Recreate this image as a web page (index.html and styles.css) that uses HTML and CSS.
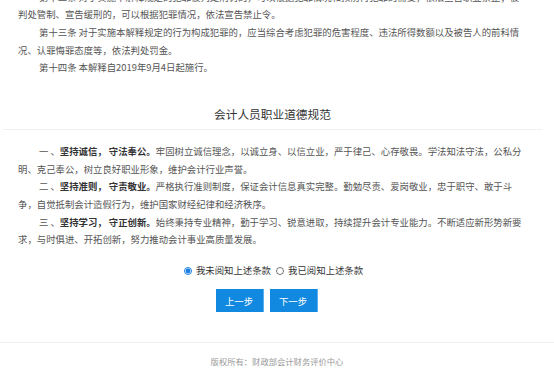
FILE: index.html
```html
<!DOCTYPE html>
<html lang="zh-CN">
<head>
    <meta charset="UTF-8">
    <meta name="viewport" content="width=device-width, initial-scale=1.0">
    <title>会计人员职业道德规范</title>
    <link rel="stylesheet" href="styles.css">
</head>
<body>

    <div class="page">
        <div class="law">
            <p>第十二条 对于实施本解释规定的犯罪被判处刑罚的，可以根据犯罪情况和预防再犯罪的需要，依法宣告职业禁止；被判处管制、宣告缓刑的，可以根据犯罪情况，依法宣告禁止令。</p>
            <p>第十三条 对于实施本解释规定的行为构成犯罪的，应当综合考虑犯罪的危害程度、违法所得数额以及被告人的前科情况、认罪悔罪态度等，依法判处罚金。</p>
            <p>第十四条 本解释自2019年9月4日起施行。</p>
        </div>

        <div class="title">会计人员职业道德规范</div>

        <div class="rules">
            <p>一 、<b>坚持诚信， 守法奉公。</b>牢固树立诚信理念，以诚立身、以信立业，严于律己、心存敬畏。学法知法守法，公私分明、克己奉公，树立良好职业形象，维护会计行业声誉。</p>
            <p>二 、<b>坚持准则， 守责敬业。</b>严格执行准则制度，保证会计信息真实完整。勤勉尽责、爱岗敬业，忠于职守、敢于斗争，自觉抵制会计造假行为，维护国家财经纪律和经济秩序。</p>
            <p>三 、<b>坚持学习， 守正创新。</b>始终秉持专业精神，勤于学习、锐意进取，持续提升会计专业能力。不断适应新形势新要求，与时俱进、开拓创新，努力推动会计事业高质量发展。</p>
        </div>

        <div class="agree">
            <label><input type="radio" name="agree" checked>我未阅知上述条款</label>
            <label><input type="radio" name="agree">我已阅知上述条款</label>
        </div>

        <div class="steps">
            <button type="button" class="step-btn">上一步</button>
            <button type="button" class="step-btn">下一步</button>
        </div>
    </div>

    <div class="footer">版权所有：财政部会计财务评价中心</div>

</body>
</html>
```

FILE: styles.css
```css
body {
    margin: 0;
    padding: 0;
    background: #fff;
    color: #555;
    font-family: "Noto Sans CJK SC", "Liberation Sans", sans-serif;
    font-size: 9.4px;
    text-spacing-trim: space-all; /* keep full-width punctuation, like the original */
}

.page {
    margin: 0 12px 0 3px;
}

.law, .rules {
    padding: 0 15px;
}

.law {
    margin-top: -11.5px;
}

.law p, .rules p {
    margin: 0;
    line-height: 17.67px;
    text-indent: 21px;
}

.rules b {
    color: #333;
    font-weight: bold;
}

.title {
    margin-top: 22px;
    height: 30px;
    line-height: 30px;
    font-size: 11.7px;
    color: #333;
    text-align: center;
    border-bottom: 1px solid #f0f0f0;
}

.rules {
    padding-top: 13px;
}

.agree {
    margin-top: 13px;
    padding-left: 2px;
    display: flex;
    justify-content: center;
    gap: 5px;
    line-height: 17.6px;
    color: #333;
}

.agree label {
    display: flex;
    align-items: center;
    gap: 4px;
}

.agree input {
    width: 8px;
    height: 8px;
    margin: 0;
    accent-color: #1a7fe0;
}

.steps {
    margin-top: 10px;
    padding-right: 12px;
    display: flex;
    justify-content: center;
    gap: 6px;
}

.step-btn {
    width: 48px;
    height: 23px;
    padding: 0;
    border: none;
    border-right: 1px solid #5aaef0;
    background: #1289e0;
    color: #fff;
    font-family: inherit;
    font-size: 9.4px;
    cursor: pointer;
}

.footer {
    margin-top: 30px;
    border-top: 1px solid #f0f0f0;
    padding-top: 12px;
    line-height: 12px;
    font-size: 8.3px;
    color: #999;
    text-align: center;
}
```
